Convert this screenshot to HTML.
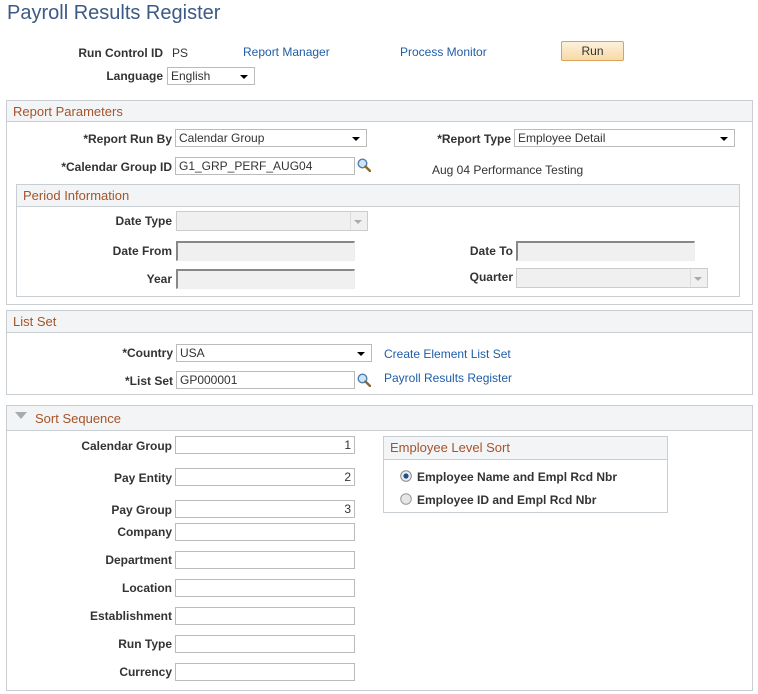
<!DOCTYPE html>
<html><head><meta charset="utf-8"><style>
body{margin:0;width:758px;height:694px;background:#fff;font-family:"Liberation Sans",Arial,sans-serif;font-size:12px;color:#333;position:relative;overflow:hidden}
.a{position:absolute}
.l{position:absolute;text-align:right;font-weight:bold;color:#333;white-space:nowrap}
.in{position:absolute;box-sizing:border-box;border:1px solid #bbb;background:#fff;height:18px;padding:1px 3px;line-height:14px;font-size:12px;color:#333}
.dis{background:#f0f0f0;border-top:2px solid #888;border-left:2px solid #888;border-right:1px solid #eee;border-bottom:1px solid #eee}
.sel::after{content:"";position:absolute;right:6px;top:7px;border-left:4px solid transparent;border-right:4px solid transparent;border-top:4px solid #000}
.box{position:absolute;box-sizing:border-box;border:1px solid #c9ced3}
.hd{position:absolute;left:0;right:0;top:0;background:#f2f4f5;border-bottom:1px solid #c9ced3;color:#a5542a;font-size:13px;padding-left:6px;box-sizing:border-box}
.lk{position:absolute;color:#1f5da8;white-space:nowrap}
.mag{position:absolute;width:14px;height:14px}
</style></head><body>
<div class="a" style="left:7px;top:2px;font-size:20px;color:#3c5a86">Payroll Results Register</div>

<div class="l" style="left:12px;width:151px;top:46px">Run Control ID</div>
<div class="a" style="left:172px;top:46px">PS</div>
<div class="lk" style="left:243px;top:45px">Report Manager</div>
<div class="lk" style="left:400px;top:45px">Process Monitor</div>
<div class="a" style="left:561px;top:41px;width:63px;height:20px;box-sizing:border-box;border:1px solid #d9a35a;border-radius:2px;background:linear-gradient(#fdf1dc,#f7d9a6);text-align:center;line-height:18px;font-size:12px;color:#333">Run</div>
<div class="l" style="left:12px;width:151px;top:69px">Language</div>
<div class="in sel" style="left:167px;top:67px;width:88px">English</div>

<div class="box" style="left:6px;top:100px;width:747px;height:205px"><div class="hd" style="height:21px;line-height:21px">Report Parameters</div></div>
<div class="l" style="left:12px;width:160px;top:132px">*Report Run By</div>
<div class="in sel" style="left:175px;top:129px;width:192px">Calendar Group</div>
<div class="l" style="left:380px;width:131px;top:132px">*Report Type</div>
<div class="in sel" style="left:514px;top:129px;width:221px">Employee Detail</div>
<div class="l" style="left:12px;width:160px;top:160px">*Calendar Group ID</div>
<div class="in" style="left:175px;top:157px;width:180px">G1_GRP_PERF_AUG04</div>
<svg class="mag" style="left:357px;top:158px" viewBox="0 0 14 14"><circle cx="5.5" cy="5.5" r="4.3" fill="#cfe3f5" stroke="#4a7fb0" stroke-width="1.4"/><path d="M8.5 8.5L13 13" stroke="#8a6a2a" stroke-width="2.4" stroke-linecap="round"/></svg>
<div class="a" style="left:432px;top:163px">Aug 04 Performance Testing</div>

<div class="box" style="left:16px;top:184px;width:724px;height:113px"><div class="hd" style="height:22px;line-height:22px">Period Information</div></div>
<div class="l" style="left:12px;width:160px;top:214px">Date Type</div>
<div class="in" style="left:176px;top:211px;width:192px;height:20px;background:#f0f0f0;border-color:#ccc"><span style="position:absolute;right:0;top:0;width:16px;height:18px;border-left:1px solid #ddd"></span><span style="position:absolute;right:5px;top:8px;border-left:4px solid transparent;border-right:4px solid transparent;border-top:4px solid #aaa"></span></div>
<div class="l" style="left:12px;width:160px;top:244px">Date From</div>
<div class="in dis" style="left:176px;top:241px;width:179px;height:20px"></div>
<div class="l" style="left:380px;width:133px;top:244px">Date To</div>
<div class="in dis" style="left:516px;top:241px;width:179px;height:20px"></div>
<div class="l" style="left:12px;width:160px;top:272px">Year</div>
<div class="in dis" style="left:176px;top:269px;width:179px;height:20px"></div>
<div class="l" style="left:380px;width:133px;top:270px">Quarter</div>
<div class="in" style="left:516px;top:268px;width:192px;height:20px;background:#f0f0f0;border-color:#ccc"><span style="position:absolute;right:0;top:0;width:16px;height:18px;border-left:1px solid #ddd"></span><span style="position:absolute;right:5px;top:8px;border-left:4px solid transparent;border-right:4px solid transparent;border-top:4px solid #aaa"></span></div>

<div class="box" style="left:6px;top:310px;width:747px;height:85px"><div class="hd" style="height:22px;line-height:22px">List Set</div></div>
<div class="l" style="left:12px;width:161px;top:346px">*Country</div>
<div class="in sel" style="left:176px;top:344px;width:196px">USA</div>
<div class="lk" style="left:384px;top:347px">Create Element List Set</div>
<div class="l" style="left:12px;width:161px;top:374px">*List Set</div>
<div class="in" style="left:176px;top:371px;width:179px">GP000001</div>
<svg class="mag" style="left:357px;top:373px" viewBox="0 0 14 14"><circle cx="5.5" cy="5.5" r="4.3" fill="#cfe3f5" stroke="#4a7fb0" stroke-width="1.4"/><path d="M8.5 8.5L13 13" stroke="#8a6a2a" stroke-width="2.4" stroke-linecap="round"/></svg>
<div class="lk" style="left:384px;top:371px">Payroll Results Register</div>

<div class="box" style="left:6px;top:405px;width:747px;height:286px"><div class="hd" style="height:25px;line-height:25px;padding-left:28px">Sort Sequence</div></div>
<div class="a" style="left:15px;top:412px;border-left:6px solid transparent;border-right:6px solid transparent;border-top:7px solid #a8acb0"></div>

<div class="l" style="left:12px;width:160px;top:439px">Calendar Group</div>
<div class="in" style="left:175px;top:436px;width:180px;text-align:right">1</div>
<div class="l" style="left:12px;width:160px;top:471px">Pay Entity</div>
<div class="in" style="left:175px;top:468px;width:180px;text-align:right">2</div>
<div class="l" style="left:12px;width:160px;top:503px">Pay Group</div>
<div class="in" style="left:175px;top:500px;width:180px;text-align:right">3</div>
<div class="l" style="left:12px;width:160px;top:525px">Company</div>
<div class="in" style="left:175px;top:523px;width:180px"></div>
<div class="l" style="left:12px;width:160px;top:553px">Department</div>
<div class="in" style="left:175px;top:551px;width:180px"></div>
<div class="l" style="left:12px;width:160px;top:581px">Location</div>
<div class="in" style="left:175px;top:579px;width:180px"></div>
<div class="l" style="left:12px;width:160px;top:609px">Establishment</div>
<div class="in" style="left:175px;top:607px;width:180px"></div>
<div class="l" style="left:12px;width:160px;top:637px">Run Type</div>
<div class="in" style="left:175px;top:635px;width:180px"></div>
<div class="l" style="left:12px;width:160px;top:665px">Currency</div>
<div class="in" style="left:175px;top:663px;width:180px"></div>

<div class="box" style="left:383px;top:436px;width:285px;height:77px"><div class="hd" style="height:23px;line-height:22px">Employee Level Sort</div></div>
<svg class="a" style="left:400px;top:470px" width="12" height="12" viewBox="0 0 12 12"><circle cx="6" cy="6" r="5.3" fill="#eee" stroke="#888"/><circle cx="6" cy="6" r="2.6" fill="#1d4f8f"/></svg>
<div class="l" style="left:417px;top:470px">Employee Name and Empl Rcd Nbr</div>
<svg class="a" style="left:400px;top:493px" width="12" height="12" viewBox="0 0 12 12"><circle cx="6" cy="6" r="5.3" fill="#e6e6e6" stroke="#999"/></svg>
<div class="l" style="left:417px;top:493px">Employee ID and Empl Rcd Nbr</div>
</body></html>
